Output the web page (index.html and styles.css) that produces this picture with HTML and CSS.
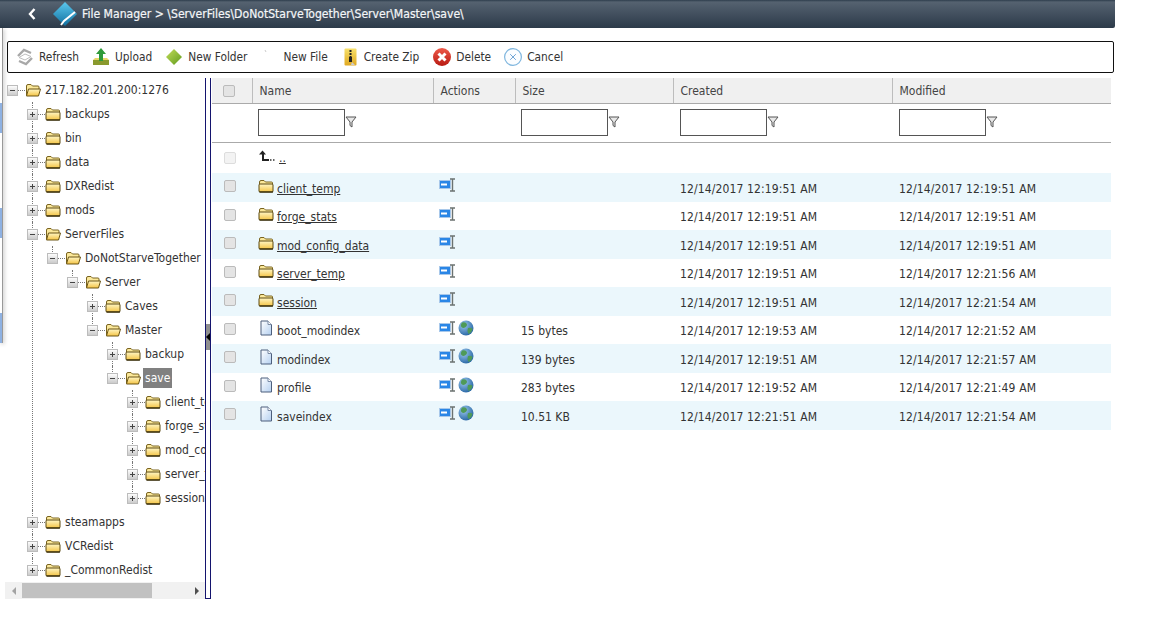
FILE: index.html
```html
<!DOCTYPE html>
<html lang="en">
<head>
    <meta charset="UTF-8">
    <meta name="viewport" content="width=device-width, initial-scale=1.0">
    <title>File Manager</title>
    <link rel="stylesheet" href="styles.css">
</head>
<body>

    <!-- Shared icons -->
    <svg class="sprite" xmlns="http://www.w3.org/2000/svg">
        <defs>
            <linearGradient id="gFolder" x1="0" y1="0" x2="0" y2="1"><stop offset="0" stop-color="#fff6c4"/><stop offset="1" stop-color="#f4c445"/></linearGradient>
            <linearGradient id="gToggle" x1="0" y1="0" x2="0" y2="1"><stop offset="0" stop-color="#fff"/><stop offset="1" stop-color="#c8c8c8"/></linearGradient>
            <linearGradient id="gFile" x1="0" y1="0" x2="1" y2="1"><stop offset="0" stop-color="#fff"/><stop offset="1" stop-color="#b5d0f0"/></linearGradient>
            <linearGradient id="gLogo" x1="0" y1="0" x2="0" y2="1"><stop offset="0" stop-color="#5cc8ee"/><stop offset="1" stop-color="#0f6f9f"/></linearGradient>
            <linearGradient id="gGreen" x1="0" y1="0" x2="1" y2="1"><stop offset="0" stop-color="#c3dd5a"/><stop offset="1" stop-color="#5f9a1c"/></linearGradient>
            <linearGradient id="gRed" x1="0" y1="0" x2="0" y2="1"><stop offset="0" stop-color="#ee5a4a"/><stop offset="1" stop-color="#b81a12"/></linearGradient>
            <linearGradient id="gZip" x1="0" y1="0" x2="0" y2="1"><stop offset="0" stop-color="#f7e06a"/><stop offset="1" stop-color="#e0a820"/></linearGradient>
            <radialGradient id="gGlobe" cx="0.35" cy="0.3" r="0.8"><stop offset="0" stop-color="#9cc8ef"/><stop offset="1" stop-color="#1f5f9e"/></radialGradient>
        </defs>
        <symbol id="i-folder" viewBox="0 0 16 14">
            <path d="M1.5 13V3Q1.500 1.500 3 1.500H6L7.500 3H13.500Q14.500 3 14.500 4V12.500" fill="#fbe89a" stroke="#7a6420"/>
            <rect x="1" y="5" width="14" height="8" rx="1" fill="url(#gFolder)" stroke="#5c4a12"/>
            <path d="M1.500 13H15" stroke="#2e2508" stroke-width="1.200"/>
        </symbol>
        <symbol id="i-folder-open" viewBox="0 0 16 14">
            <path d="M1.500 12V3Q1.500 1.500 3 1.500H6L7.500 3H13Q14 3 14 4V6" fill="#fbe89a" stroke="#7a6420"/>
            <path d="M1.500 13L3.500 6H15.500L13.500 13Z" fill="url(#gFolder)" stroke="#6a5414"/>
        </symbol>
        <symbol id="i-plus" viewBox="0 0 11 11">
            <rect x="0.5" y="0.5" width="10" height="10" fill="url(#gToggle)" stroke="#bcbcbc"/>
            <path d="M3 5.500H8M5.500 3V8" stroke="#444"/>
        </symbol>
        <symbol id="i-minus" viewBox="0 0 11 11">
            <rect x="0.5" y="0.5" width="10" height="10" fill="url(#gToggle)" stroke="#bcbcbc"/>
            <path d="M3 5.500H8" stroke="#444"/>
        </symbol>
        <symbol id="i-file" viewBox="0 0 14 16">
            <path d="M2 1H9L12.500 4.500V15H2Z" fill="url(#gFile)" stroke="#4d5f7c"/>
            <path d="M9 1V4.500H12.500" fill="#fff" stroke="#7a8ba5"/>
        </symbol>
        <symbol id="i-rename" viewBox="0 0 18 14">
            <rect x="0.5" y="2.500" width="11" height="8" fill="#2a86e6" stroke="#a8c8ea"/>
            <rect x="2" y="5.500" width="6" height="2" fill="#fff"/>
            <path d="M11 1H16M13.500 1V13M11 13H16" stroke="#6b7270" stroke-width="1.400" fill="none"/>
        </symbol>
        <symbol id="i-globe" viewBox="0 0 16 16">
            <circle cx="8" cy="8" r="7.500" fill="url(#gGlobe)"/>
            <path d="M4 2.500Q7 1.500 8.500 3.500T7 7.500Q5 8.500 3.500 7T4 2.500ZM10 8Q13 7 14.500 9Q13.500 13 10.500 14Q8.500 11 10 8Z" fill="#4f9a58"/>
        </symbol>
        <symbol id="i-filter" viewBox="0 0 12 12">
            <path d="M1 1H11L7 6V11L5 9.500V6Z" fill="#e8e8e8" stroke="#555"/>
        </symbol>
    </svg>

    <header class="topbar">
        <svg class="back" viewBox="0 0 8 12"><path d="M6.500 1L2 6L6.500 11" fill="none" stroke="#fff" stroke-width="2.400"/></svg>
        <svg class="logo" viewBox="0 0 24 24">
            <path d="M12 0L24 12L12 24L0 12Z" fill="url(#gLogo)"/>
            <path d="M22 10L11 19L8 23" fill="none" stroke="#fff" stroke-width="2"/>
        </svg>
        <span class="path">File Manager &gt; \ServerFiles\DoNotStarveTogether\Server\Master\save\</span>
    </header>

    <!-- Window behind the dialog, only its edge shows -->
    <div class="behind">
        <div class="behind-tab"></div>
        <div class="behind-tab"></div>
        <div class="behind-tab"></div>
    </div>

    <nav class="toolbar">
        <a class="tool">
            <svg class="tool-icon" viewBox="0 0 18 18"><path d="M2 8L8 2L15 5M16 10L10 16L3 13" fill="none" stroke="#a8a8a8" stroke-width="2.400"/><path d="M3 9.500L9 6L15 8.500L9 12Z" fill="none" stroke="#bdbdbd"/></svg>
            Refresh
        </a>
        <a class="tool">
            <svg class="tool-icon" viewBox="0 0 18 18"><path d="M1 12H17V17H1Z" fill="#8a9a2e"/><path d="M1 12H17L15 10H3Z" fill="#e8d66a"/><path d="M9 0L14 6H11V13H7V6H4Z" fill="#2f9a3a"/></svg>
            Upload
        </a>
        <a class="tool">
            <svg class="tool-icon" viewBox="0 0 18 18"><path d="M9 1L17 9L9 17L1 9Z" fill="url(#gGreen)"/></svg>
            New Folder
        </a>
        <a class="tool">
            <svg class="tool-icon" viewBox="0 0 18 18"><path d="M5 2L6 4" stroke="#ccc"/></svg>
            New File
        </a>
        <a class="tool tool-zip">
            <svg class="tool-icon" viewBox="0 0 13 18"><rect x="0.5" y="0.5" width="12" height="17" rx="1" fill="url(#gZip)"/><path d="M6.500 2V10" stroke="#222" stroke-width="2" stroke-dasharray="2 1"/><rect x="5" y="9" width="3" height="5" fill="#222"/><path d="M8 14L11 17H7Z" fill="#ccc"/></svg>
            Create Zip
        </a>
        <a class="tool tool-delete">
            <svg class="tool-icon" viewBox="0 0 18 18"><circle cx="9" cy="9" r="9" fill="url(#gRed)"/><path d="M5.500 5.500L12.500 12.500M12.500 5.500L5.500 12.500" stroke="#fff" stroke-width="3"/></svg>
            Delete
        </a>
        <a class="tool">
            <svg class="tool-icon" viewBox="0 0 18 18"><circle cx="9" cy="9" r="8.400" fill="#fbfdff" stroke="#7fb6de" stroke-width="1.200"/><path d="M6.200 6.200L11.800 11.800M11.800 6.200L6.200 11.800" stroke="#6fa5d6"/></svg>
            Cancel
        </a>
    </nav>

    <main class="main">
        <aside class="side">
            <div class="tree-scroll">
                <ul class="tree">
                    <li>
                        <div class="node"><svg class="toggle"><use href="#i-minus"/></svg><i class="dots"></i><svg class="node-icon"><use href="#i-folder-open"/></svg><span class="label">217.182.201.200:1276</span></div>
                        <ul>
                            <li><div class="node"><svg class="toggle"><use href="#i-plus"/></svg><i class="dots"></i><svg class="node-icon"><use href="#i-folder"/></svg><span class="label">backups</span></div></li>
                            <li><div class="node"><svg class="toggle"><use href="#i-plus"/></svg><i class="dots"></i><svg class="node-icon"><use href="#i-folder"/></svg><span class="label">bin</span></div></li>
                            <li><div class="node"><svg class="toggle"><use href="#i-plus"/></svg><i class="dots"></i><svg class="node-icon"><use href="#i-folder"/></svg><span class="label">data</span></div></li>
                            <li><div class="node"><svg class="toggle"><use href="#i-plus"/></svg><i class="dots"></i><svg class="node-icon"><use href="#i-folder"/></svg><span class="label">DXRedist</span></div></li>
                            <li><div class="node"><svg class="toggle"><use href="#i-plus"/></svg><i class="dots"></i><svg class="node-icon"><use href="#i-folder"/></svg><span class="label">mods</span></div></li>
                            <li>
                                <div class="node"><svg class="toggle"><use href="#i-minus"/></svg><i class="dots"></i><svg class="node-icon"><use href="#i-folder-open"/></svg><span class="label">ServerFiles</span></div>
                                <ul>
                                    <li>
                                        <div class="node"><svg class="toggle"><use href="#i-minus"/></svg><i class="dots"></i><svg class="node-icon"><use href="#i-folder-open"/></svg><span class="label">DoNotStarveTogether</span></div>
                                        <ul>
                                            <li>
                                                <div class="node"><svg class="toggle"><use href="#i-minus"/></svg><i class="dots"></i><svg class="node-icon"><use href="#i-folder-open"/></svg><span class="label">Server</span></div>
                                                <ul>
                                                    <li><div class="node"><svg class="toggle"><use href="#i-plus"/></svg><i class="dots"></i><svg class="node-icon"><use href="#i-folder"/></svg><span class="label">Caves</span></div></li>
                                                    <li>
                                                        <div class="node"><svg class="toggle"><use href="#i-minus"/></svg><i class="dots"></i><svg class="node-icon"><use href="#i-folder-open"/></svg><span class="label">Master</span></div>
                                                        <ul>
                                                            <li><div class="node"><svg class="toggle"><use href="#i-plus"/></svg><i class="dots"></i><svg class="node-icon"><use href="#i-folder"/></svg><span class="label">backup</span></div></li>
                                                            <li>
                                                                <div class="node"><svg class="toggle"><use href="#i-minus"/></svg><i class="dots"></i><svg class="node-icon"><use href="#i-folder-open"/></svg><span class="label selected">save</span></div>
                                                                <ul>
                                                                    <li><div class="node"><svg class="toggle"><use href="#i-plus"/></svg><i class="dots"></i><svg class="node-icon"><use href="#i-folder"/></svg><span class="label">client_temp</span></div></li>
                                                                    <li><div class="node"><svg class="toggle"><use href="#i-plus"/></svg><i class="dots"></i><svg class="node-icon"><use href="#i-folder"/></svg><span class="label">forge_stats</span></div></li>
                                                                    <li><div class="node"><svg class="toggle"><use href="#i-plus"/></svg><i class="dots"></i><svg class="node-icon"><use href="#i-folder"/></svg><span class="label">mod_config_data</span></div></li>
                                                                    <li><div class="node"><svg class="toggle"><use href="#i-plus"/></svg><i class="dots"></i><svg class="node-icon"><use href="#i-folder"/></svg><span class="label">server_temp</span></div></li>
                                                                    <li><div class="node"><svg class="toggle"><use href="#i-plus"/></svg><i class="dots"></i><svg class="node-icon"><use href="#i-folder"/></svg><span class="label">session</span></div></li>
                                                                </ul>
                                                            </li>
                                                        </ul>
                                                    </li>
                                                </ul>
                                            </li>
                                        </ul>
                                    </li>
                                </ul>
                            </li>
                            <li><div class="node"><svg class="toggle"><use href="#i-plus"/></svg><i class="dots"></i><svg class="node-icon"><use href="#i-folder"/></svg><span class="label">steamapps</span></div></li>
                            <li><div class="node"><svg class="toggle"><use href="#i-plus"/></svg><i class="dots"></i><svg class="node-icon"><use href="#i-folder"/></svg><span class="label">VCRedist</span></div></li>
                            <li><div class="node"><svg class="toggle"><use href="#i-plus"/></svg><i class="dots"></i><svg class="node-icon"><use href="#i-folder"/></svg><span class="label">_CommonRedist</span></div></li>
                        </ul>
                    </li>
                </ul>
            </div>
            <div class="hscroll">
                <span class="arrow-left"></span>
                <div class="hscroll-track"><div class="hscroll-thumb"></div></div>
                <span class="arrow-right"></span>
            </div>
        </aside>

        <div class="splitter"><div class="splitter-handle"></div></div>

        <table class="grid">
            <colgroup>
                <col class="col-check"><col class="col-name"><col class="col-actions"><col class="col-size"><col class="col-date"><col class="col-date">
            </colgroup>
            <thead>
                <tr class="head">
                    <th class="cell-check"><span class="check"></span></th>
                    <th>Name</th>
                    <th>Actions</th>
                    <th>Size</th>
                    <th>Created</th>
                    <th>Modified</th>
                </tr>
                <tr class="filters">
                    <td></td>
                    <td><div class="filter"><input type="text"><svg class="filter-icon"><use href="#i-filter"/></svg></div></td>
                    <td></td>
                    <td><div class="filter"><input type="text"><svg class="filter-icon"><use href="#i-filter"/></svg></div></td>
                    <td><div class="filter"><input type="text"><svg class="filter-icon"><use href="#i-filter"/></svg></div></td>
                    <td><div class="filter"><input type="text"><svg class="filter-icon"><use href="#i-filter"/></svg></div></td>
                </tr>
            </thead>
            <tbody>
                <tr class="up">
                    <td class="cell-check"><span class="check check-off"></span></td>
                    <td><div class="name">
                        <svg class="up-icon" viewBox="0 0 18 12"><path d="M4.500 0.500L8 4.500H6V9H11V11H4V4.500H1Z" fill="#222"/><path d="M12 10H13.500M15 10H16.500" stroke="#333" stroke-width="1.500"/></svg>
                        <a class="link">..</a>
                    </div></td>
                    <td></td><td></td><td></td><td></td>
                </tr>
                <tr class="alt">
                    <td class="cell-check"><span class="check"></span></td>
                    <td><div class="name"><svg class="row-icon"><use href="#i-folder"/></svg><a class="link">client_temp</a></div></td>
                    <td><div class="actions"><svg class="act-rename"><use href="#i-rename"/></svg></div></td>
                    <td></td>
                    <td>12/14/2017 12:19:51 AM</td>
                    <td>12/14/2017 12:19:51 AM</td>
                </tr>
                <tr>
                    <td class="cell-check"><span class="check"></span></td>
                    <td><div class="name"><svg class="row-icon"><use href="#i-folder"/></svg><a class="link">forge_stats</a></div></td>
                    <td><div class="actions"><svg class="act-rename"><use href="#i-rename"/></svg></div></td>
                    <td></td>
                    <td>12/14/2017 12:19:51 AM</td>
                    <td>12/14/2017 12:19:51 AM</td>
                </tr>
                <tr class="alt">
                    <td class="cell-check"><span class="check"></span></td>
                    <td><div class="name"><svg class="row-icon"><use href="#i-folder"/></svg><a class="link">mod_config_data</a></div></td>
                    <td><div class="actions"><svg class="act-rename"><use href="#i-rename"/></svg></div></td>
                    <td></td>
                    <td>12/14/2017 12:19:51 AM</td>
                    <td>12/14/2017 12:19:51 AM</td>
                </tr>
                <tr>
                    <td class="cell-check"><span class="check"></span></td>
                    <td><div class="name"><svg class="row-icon"><use href="#i-folder"/></svg><a class="link">server_temp</a></div></td>
                    <td><div class="actions"><svg class="act-rename"><use href="#i-rename"/></svg></div></td>
                    <td></td>
                    <td>12/14/2017 12:19:51 AM</td>
                    <td>12/14/2017 12:21:56 AM</td>
                </tr>
                <tr class="alt">
                    <td class="cell-check"><span class="check"></span></td>
                    <td><div class="name"><svg class="row-icon"><use href="#i-folder"/></svg><a class="link">session</a></div></td>
                    <td><div class="actions"><svg class="act-rename"><use href="#i-rename"/></svg></div></td>
                    <td></td>
                    <td>12/14/2017 12:19:51 AM</td>
                    <td>12/14/2017 12:21:54 AM</td>
                </tr>
                <tr>
                    <td class="cell-check"><span class="check"></span></td>
                    <td><div class="name"><svg class="row-icon"><use href="#i-file"/></svg><span>boot_modindex</span></div></td>
                    <td><div class="actions"><svg class="act-rename"><use href="#i-rename"/></svg><svg class="act-globe"><use href="#i-globe"/></svg></div></td>
                    <td>15 bytes</td>
                    <td>12/14/2017 12:19:53 AM</td>
                    <td>12/14/2017 12:21:52 AM</td>
                </tr>
                <tr class="alt">
                    <td class="cell-check"><span class="check"></span></td>
                    <td><div class="name"><svg class="row-icon"><use href="#i-file"/></svg><span>modindex</span></div></td>
                    <td><div class="actions"><svg class="act-rename"><use href="#i-rename"/></svg><svg class="act-globe"><use href="#i-globe"/></svg></div></td>
                    <td>139 bytes</td>
                    <td>12/14/2017 12:19:51 AM</td>
                    <td>12/14/2017 12:21:57 AM</td>
                </tr>
                <tr>
                    <td class="cell-check"><span class="check"></span></td>
                    <td><div class="name"><svg class="row-icon"><use href="#i-file"/></svg><span>profile</span></div></td>
                    <td><div class="actions"><svg class="act-rename"><use href="#i-rename"/></svg><svg class="act-globe"><use href="#i-globe"/></svg></div></td>
                    <td>283 bytes</td>
                    <td>12/14/2017 12:19:52 AM</td>
                    <td>12/14/2017 12:21:49 AM</td>
                </tr>
                <tr class="alt">
                    <td class="cell-check"><span class="check"></span></td>
                    <td><div class="name"><svg class="row-icon"><use href="#i-file"/></svg><span>saveindex</span></div></td>
                    <td><div class="actions"><svg class="act-rename"><use href="#i-rename"/></svg><svg class="act-globe"><use href="#i-globe"/></svg></div></td>
                    <td>10.51 KB</td>
                    <td>12/14/2017 12:21:51 AM</td>
                    <td>12/14/2017 12:21:54 AM</td>
                </tr>
            </tbody>
        </table>
    </main>

</body>
</html>
```
FILE: styles.css
```css
* {
    box-sizing: border-box;
}

body {
    margin: 0;
    background: #fff;
    color: #333;
    font-family: "DejaVu Sans Condensed", "DejaVu Sans", sans-serif;
    font-size: 12px;
    overflow: hidden;
}

.sprite {
    display: block;
    width: 0;
    height: 0;
}

/* Top bar */
.topbar {
    display: flex;
    align-items: center;
    width: 1115px;
    height: 28px;
    padding-left: 28px;
    border-bottom-right-radius: 2px;
    background: linear-gradient(#2e3d4d 0, #556270 2px, #2c3a49 100%);
    color: #fff;
}

.back {
    width: 8px;
    height: 12px;
}

.logo {
    width: 24px;
    height: 24px;
    margin-left: 17px;
}

.path {
    margin-left: 5px;
    font-size: 12.1px;
    color: #f4f6f8;
    -webkit-text-stroke: 0.2px #f4f6f8;
}

/* Edge of the window behind */
.behind {
    position: absolute;
    top: 28px;
    left: 0;
    width: 3px;
    height: 315px;
    padding-top: 75px;
    border-right: 1px solid #999;
    box-shadow: 1px 1px 4px rgba(0, 0, 0, 0.25);
    display: flex;
    flex-direction: column;
    gap: 75px;
}

.behind-tab {
    height: 30px;
    background: #8eb1e2;
}

/* Toolbar */
.toolbar {
    display: flex;
    align-items: center;
    gap: 13px;
    width: 1107px;
    height: 32px;
    margin: 13px 0 5px 7px;
    padding-left: 8px;
    border: 1px solid #111;
    border-radius: 2px;
    font-size: 11.8px;
}

.tool {
    display: flex;
    align-items: center;
    gap: 5px;
    color: #333;
}

.tool-icon {
    width: 18px;
    height: 18px;
}

.tool-zip {
    gap: 7px;
    margin-left: 3px;
}

.tool-zip .tool-icon {
    width: 13px;
}

.tool-delete {
    margin-left: 1px;
}

/* Layout */
.main {
    display: flex;
    align-items: flex-start;
}

.side {
    width: 200px;
    margin-left: 5px;
    flex-shrink: 0;
}

.tree-scroll {
    height: 504px;
    overflow: hidden;
}

/* Tree */
.tree,
.tree ul {
    margin: 0;
    padding: 0;
    list-style: none;
}

.tree {
    padding-left: 2px;
}

.tree ul {
    padding-left: 20px;
}

.tree li {
    position: relative;
    white-space: nowrap;
}

.tree ul > li::before {
    content: "";
    position: absolute;
    left: 5px;
    top: 0;
    height: 100%;
    border-left: 1px dotted #777;
}

.tree ul > li:last-child::before {
    height: 12px;
}

.node {
    display: flex;
    align-items: center;
    height: 24px;
}

.toggle {
    position: relative;
    z-index: 1;
    width: 11px;
    height: 11px;
    flex-shrink: 0;
}

.dots {
    width: 7px;
    border-top: 1px dotted #777;
    flex-shrink: 0;
}

.node-icon {
    width: 16px;
    height: 14px;
    flex-shrink: 0;
}

.label {
    margin-left: 2px;
    padding: 0 2px;
    line-height: 20px;
    color: #333;
}

.selected {
    background: #808080;
    color: #fff;
}

/* Tree scrollbar */
.hscroll {
    display: flex;
    align-items: center;
    height: 17px;
    background: #f1f1f1;
}

.hscroll-track {
    flex: 1;
}

.hscroll-thumb {
    width: 130px;
    height: 15px;
    background: #c1c1c1;
}

.arrow-left,
.arrow-right {
    width: 17px;
    display: flex;
    justify-content: center;
}

.arrow-left::before {
    content: "";
    border: 4px solid transparent;
    border-left: 0;
    border-right: 4px solid #a3a3a3;
}

.arrow-right::before {
    content: "";
    border: 4px solid transparent;
    border-right: 0;
    border-left: 4px solid #505050;
}

/* Splitter */
.splitter {
    display: flex;
    align-items: flex-start;
    width: 6px;
    height: 521px;
    padding-top: 246px;
    border-left: 1px solid #14146e;
    border-right: 1px solid #14146e;
    border-bottom: 1px solid #14146e;
    flex-shrink: 0;
}

.splitter-handle {
    position: relative;
    width: 100%;
    height: 26px;
    background: #8f8f8f;
}

.splitter-handle::before {
    content: "";
    position: absolute;
    left: 0;
    top: 9px;
    border: 4px solid transparent;
    border-left: 0;
    border-right: 4px solid #000;
}

/* Grid */
.grid {
    width: 899px;
    margin-left: 1px;
    border-collapse: collapse;
    table-layout: fixed;
    flex-shrink: 0;
}

.col-check { width: 40px; }
.col-name { width: 181px; }
.col-actions { width: 82px; }
.col-size { width: 158px; }
.col-date { width: 219px; }

.grid th {
    height: 25px;
    padding: 2px 7px 0;
    border-left: 1px solid #bdbdbd;
    border-bottom: 1px solid #aaa;
    background: #f0f0f0;
    font-weight: normal;
    text-align: left;
    color: #444;
}

.grid th:first-child {
    border-left: none;
}

.grid td {
    height: 28.5px;
    padding: 3px 7px 0;
    color: #333;
}

.grid td:nth-child(4) {
    padding-left: 6px;
}

.grid td:nth-child(n+5) {
    letter-spacing: 0.13px;
}

.grid .cell-check {
    padding: 0 0 3px 0;
    text-align: center;
}

.grid th.cell-check {
    padding: 0;
}

.grid .filters td {
    height: 39px;
    padding: 0 6px 1px;
    border-bottom: 1px solid #aaa;
}

.grid .filters td:nth-child(n+5) {
    padding-left: 7px;
}

.grid .up td {
    height: 31px;
    padding-top: 0;
}

.grid .up .cell-check {
    padding: 0;
}

.alt td {
    background: #ebf7fc;
}

.check {
    display: inline-block;
    width: 12px;
    height: 12px;
    margin-right: 5px;
    vertical-align: middle;
    border: 1px solid #bbb;
    border-radius: 2px;
    background: #e4e4e4;
}

.check-off {
    background: #f3f3f3;
    border-color: #ddd;
}

.filter {
    display: flex;
    align-items: flex-end;
}

.filter input {
    width: 87px;
    height: 27px;
    padding: 0 3px;
    border: 1px solid #555;
    border-radius: 0;
    background: #fff;
}

.filter-icon {
    width: 12px;
    height: 12px;
    margin-bottom: 8px;
}

.name {
    display: flex;
    align-items: center;
    margin-left: -1px;
}

.row-icon {
    width: 16px;
    height: 16px;
    margin-right: 3px;
    margin-top: -6px;
    flex-shrink: 0;
}

.up-icon {
    width: 18px;
    height: 12px;
    margin-right: 3px;
    margin-top: -3px;
}

.link {
    color: #333;
    text-decoration: underline;
}

.actions {
    display: flex;
    align-items: center;
    gap: 1px;
    margin-left: -1px;
    margin-top: -7px;
}

.act-rename {
    width: 18px;
    height: 14px;
}

.act-globe {
    width: 16px;
    height: 16px;
}
```
